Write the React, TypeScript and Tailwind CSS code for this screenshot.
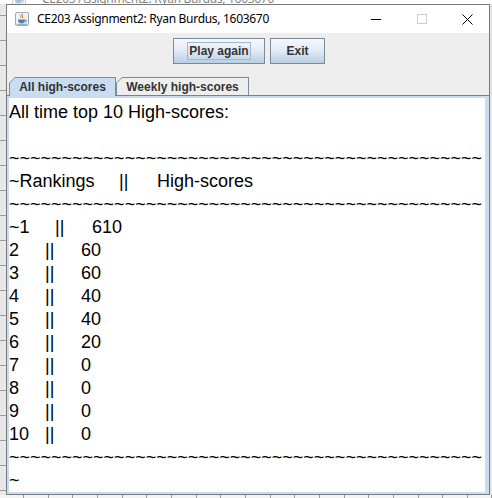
const scores: [string, string][] = [
  ["~1", "610"],
  ["2", "60"],
  ["3", "60"],
  ["4", "40"],
  ["5", "40"],
  ["6", "20"],
  ["7", "0"],
  ["8", "0"],
  ["9", "0"],
  ["10", "0"],
];

const tildes = "~".repeat(45);
const title = "CE203 Assignment2: Ryan Burdus, 1603670";

function JavaIcon() {
  return (
    <svg width="14" height="14" viewBox="0 0 16 16">
      <rect x="0.5" y="0.5" width="15" height="15" rx="2" fill="#eef2f8" stroke="#8797b0" />
      <path d="M8.5 2c-2 1.6 1.6 2.6-.4 5" fill="none" stroke="#e76f00" strokeWidth="1.2" />
      <path d="M6.3 3.5c-1.2 1 .9 1.7-.2 3.2" fill="none" stroke="#e76f00" strokeWidth="0.9" />
      <path d="M3.5 8.5h8v1.6c0 1.7-1.8 2.9-4 2.9s-4-1.2-4-2.9z" fill="#5382a1" />
      <path d="M11.5 9.2h.8a1.1 1.1 0 010 2.2h-1" fill="none" stroke="#5382a1" strokeWidth="0.9" />
      <path d="M2.5 14h11" stroke="#5382a1" strokeWidth="0.9" />
    </svg>
  );
}

function TitleBar() {
  return (
    <div className="flex h-[30px] items-center bg-white pl-[8px]">
      <JavaIcon />
      <span className="ml-[8px] font-['Noto_Sans',sans-serif] text-[12px] tracking-[-0.3px] text-black">{title}</span>
      <div className="ml-auto flex h-full">
        <div className="flex w-[46px] items-center justify-center">
          <svg width="10" height="10" viewBox="0 0 10 10">
            <path d="M0 5.5h10" stroke="#000" strokeWidth="1" />
          </svg>
        </div>
        <div className="flex w-[46px] items-center justify-center">
          <svg width="10" height="10" viewBox="0 0 10 10">
            <rect x="0.5" y="0.5" width="9" height="9" fill="none" stroke="#cccccc" />
          </svg>
        </div>
        <div className="flex w-[44px] items-center justify-center">
          <svg width="11" height="11" viewBox="0 0 11 11">
            <path d="M0.5 0.5l10 10M10.5 0.5l-10 10" stroke="#000" strokeWidth="1" />
          </svg>
        </div>
      </div>
    </div>
  );
}

function JButton({ label, width, focused }: { label: string; width: string; focused?: boolean }) {
  return (
    <div
      className={`flex h-[26px] ${width} items-center justify-center border border-[#7a8a99] bg-gradient-to-b from-[#f6f9fc] via-[#e0eaf4] to-[#b8cee4] font-['Liberation_Sans',Arial,sans-serif] text-[12px] font-bold text-[#333]`}
    >
      {focused ? <span className="border border-[#a3b8cc] px-[1px] leading-[16px]">{label}</span> : label}
    </div>
  );
}

function Tab({ label, selected, width }: { label: string; selected?: boolean; width: string }) {
  return (
    <div
      className={`${width} ${selected ? "relative z-10 -mb-px h-[19px]" : "h-[18px]"} bg-[#7a8a99] px-px pt-px [clip-path:polygon(6px_0,100%_0,100%_100%,0_100%,0_6px)]`}
    >
      <div
        className={`flex h-full items-center justify-center ${selected ? "bg-[#c8ddf2]" : "bg-[#eeeeee]"} font-['Liberation_Sans',Arial,sans-serif] text-[12px] font-bold text-[#333] [clip-path:polygon(5px_0,100%_0,100%_100%,0_100%,0_5px)]`}
      >
        {label}
      </div>
    </div>
  );
}

function ScoreText() {
  return (
    <div className="h-full overflow-hidden bg-white pt-[3px] font-['Liberation_Sans',Arial,sans-serif] text-[18px] leading-[23px] whitespace-pre text-black">
      <div>All time top 10 High-scores:</div>
      <div className="h-[23px]"></div>
      <div>{tildes}</div>
      <div>
        <span className="inline-block w-[110px]">~Rankings</span>
        <span className="inline-block w-[38px]">||</span>
        High-scores
      </div>
      <div>{tildes}</div>
      {scores.map(([rank, score], i) => (
        <div key={rank}>
          <span className={`inline-block ${i === 0 ? "w-[46px]" : "w-[36px]"}`}>{rank}</span>
          <span className={`inline-block ${i === 0 ? "w-[37px]" : "w-[36px]"}`}>||</span>
          {score}
        </div>
      ))}
      <div>{tildes}</div>
      <div>~</div>
    </div>
  );
}

export default function App() {
  return (
    <div className="flex h-[498px] w-[492px] flex-col overflow-hidden bg-[#f4f4f4]">
      {/* window behind, only its title peeks out */}
      <div className="h-[4px] overflow-hidden bg-white">
        <div className="-mt-[16px] flex h-[30px] items-center pl-[12px] opacity-50">
          <JavaIcon />
          <span className="ml-[16px] font-['Noto_Sans',sans-serif] text-[12px] tracking-[-0.3px] text-black">{title}</span>
        </div>
      </div>

      <div className="flex">
        <div className="flex w-[6px] flex-col gap-[24px] bg-[#e8e8e8] pt-[11px]">
          {Array.from({ length: 20 }).map((_, i) => (
            <div key={i} className="h-px bg-[#9a9a9a]" />
          ))}
        </div>

        {/* main frame */}
        <div className="flex h-[491px] w-[484px] flex-col border border-[#7a7a7a] bg-[#eeeeee]">
          <TitleBar />

          <div className="flex justify-center gap-[5px] pt-[5px] pl-[2px]">
            <JButton label="Play again" width="w-[92px]" focused />
            <JButton label="Exit" width="w-[55px]" />
          </div>

          <div className="mt-[13px] flex h-[18px] items-end pl-[2px]">
            <Tab label="All high-scores" selected width="w-[107px]" />
            <Tab label="Weekly high-scores" width="w-[133px]" />
          </div>

          <div className="flex-1 border-t border-[#6382bf] bg-[#c8ddf2] pt-[2px] pr-[4px] pb-[2px] pl-[2px]">
            <ScoreText />
          </div>
        </div>

        <div className="flex-1 bg-[#e4e4e4]" />
      </div>

      <div className="flex h-[3px] gap-[24px] bg-[#f4f4f4] pl-[23px]">
        {Array.from({ length: 20 }).map((_, i) => (
          <div key={i} className="w-px bg-[#9a9a9a]" />
        ))}
      </div>
    </div>
  );
}
